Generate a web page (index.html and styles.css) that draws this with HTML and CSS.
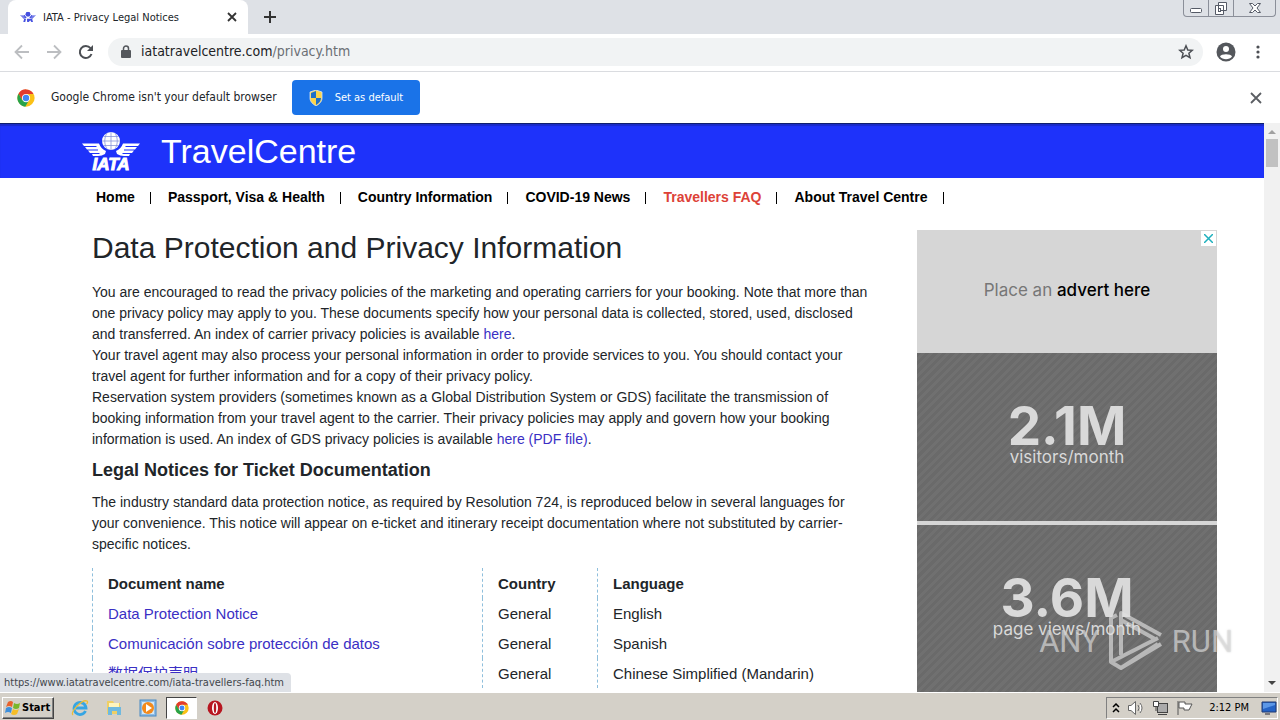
FILE: index.html
```html
<!DOCTYPE html>
<html lang="en">
<head>
<meta charset="utf-8">
<title>IATA - Privacy Legal Notices</title>
<link rel="stylesheet" href="styles.css">
</head>
<body>
<svg width="0" height="0" class="defs" aria-hidden="true">
  <symbol id="chrome" viewBox="0 0 48 48">
    <circle cx="24" cy="24" r="23" fill="#fbc116"/>
    <path d="M24 1A23 23 0 0 0 4 12.600L14 30L24 13H44A23 23 0 0 0 24 1Z" fill="#e33b2e"/>
    <path d="M4 12.600A23 23 0 0 0 22 47L32 30L14 30Z" fill="#28a34a"/>
    <circle cx="24" cy="24" r="11" fill="#fff"/>
    <circle cx="24" cy="24" r="8.500" fill="#4286f4"/>
  </symbol>
  <symbol id="wings" viewBox="0 0 58 26">
    <path d="M0 11.500H17Q19 17 24 19L23 22Q20 24 16 24H11L10 22H17L18 21H8L6 18.500H16V17.500H5L3 15H15L14 14H2ZM58 11.500H41Q39 17 34 19L35 22Q38 24 42 24H47L48 22H41L40 21H50L52 18.500H42V17.500H53L55 15H43L44 14H56Z" fill="currentColor"/>
    <circle cx="29" cy="9" r="9" fill="currentColor"/>
  </symbol>
</svg>

<header class="tabstrip">
  <div class="tab">
    <svg class="favicon" viewBox="0 0 58 38" aria-hidden="true"><use href="#wings" width="58" height="26"/><path d="M15 25H22L19 37H12ZM25 25H44L47 37H41L37 31L32 37H26Z" fill="currentColor"/></svg>
    <span class="tab-title">IATA - Privacy Legal Notices</span>
    <button class="icon-btn tab-close" aria-label="Close tab"><svg width="10" height="10" viewBox="0 0 10 10"><path d="M1 1L9 9M9 1L1 9" stroke="#333" stroke-width="1.800"/></svg></button>
  </div>
  <button class="icon-btn new-tab" aria-label="New tab"><svg width="12" height="12" viewBox="0 0 12 12"><path d="M6 0V12M0 6H12" stroke="#333" stroke-width="2"/></svg></button>
  <div class="window-buttons">
    <button aria-label="Minimize"><svg width="12" height="16" viewBox="0 0 12 16"><rect x=".5" y="8.500" width="11" height="4" rx="1" fill="#fff" stroke="#555a66"/></svg></button>
    <button aria-label="Restore"><svg width="14" height="16" viewBox="0 0 14 16"><path d="M4.500 2.500H12.500V10.500H4.500ZM1.500 5.500H9.500V14.500H1.500Z" fill="#fff" stroke="#555a66"/><rect x="4.500" y="8.500" width="2" height="3" fill="#fff" stroke="#555a66"/></svg></button>
    <button class="wide" aria-label="Close"><svg width="12" height="16" viewBox="0 0 12 16"><path d="M.5 3.500H3.500L6 6L8.500 3.500H11.500L8 8L11.500 12.500H8.500L6 10L3.500 12.500H.5L4 8Z" fill="#fff" stroke="#555a66"/></svg></button>
  </div>
</header>

<nav class="toolbar" aria-label="Browser">
  <button class="icon-btn" aria-label="Back"><svg width="16" height="16" viewBox="0 0 16 16"><path d="M15 8H2M8 1.500L1.500 8L8 14.500" fill="none" stroke="#bcbec1" stroke-width="1.800"/></svg></button>
  <button class="icon-btn" aria-label="Forward"><svg width="16" height="16" viewBox="0 0 16 16"><path d="M1 8H14M8 1.500L14.500 8L8 14.500" fill="none" stroke="#bcbec1" stroke-width="1.800"/></svg></button>
  <button class="icon-btn" aria-label="Reload"><svg width="16" height="16" viewBox="0 0 16 16"><path d="M13.500 10A6 6 0 1 1 12.500 4.200" fill="none" stroke="#4c4f54" stroke-width="2"/><path d="M15 1V7H9Z" fill="#4c4f54"/></svg></button>
  <div class="omnibox">
    <svg width="10" height="13" viewBox="0 0 10 13" aria-hidden="true"><rect y="5" width="10" height="8" rx="1" fill="#54575c"/><path d="M2.500 5.500V3.500A2.500 2.500 0 0 1 7.500 3.500V5.500" fill="none" stroke="#54575c" stroke-width="1.500"/></svg>
    <span class="url">iatatravelcentre.com<span class="path">/privacy.htm</span></span>
    <button class="icon-btn star" aria-label="Bookmark"><svg width="16" height="16" viewBox="0 0 16 16"><path d="M8 1.800L9.800 6L14.300 6.300L10.900 9.200L12 13.700L8 11.300L4 13.700L5.100 9.200L1.700 6.300L6.200 6Z" fill="none" stroke="#4c4f54" stroke-width="1.500"/></svg></button>
  </div>
  <button class="icon-btn" aria-label="Profile"><svg width="20" height="20" viewBox="0 0 20 20"><circle cx="10" cy="10" r="9.500" fill="#54575c"/><circle cx="10" cy="7" r="3" fill="#fff"/><path d="M4 14.500C5 11.500 15 11.500 16 14.500C13.500 18 6.500 18 4 14.500Z" fill="#fff"/></svg></button>
  <button class="icon-btn more" aria-label="Menu"><svg width="4" height="14" viewBox="0 0 4 14" fill="#4c4f54"><circle cx="2" cy="2" r="1.600"/><circle cx="2" cy="7" r="1.600"/><circle cx="2" cy="12" r="1.600"/></svg></button>
</nav>

<section class="infobar">
  <svg width="18" height="18" aria-hidden="true"><use href="#chrome"/></svg>
  <span class="info-text">Google Chrome isn't your default browser</span>
  <button class="default-btn"><svg width="14" height="16" viewBox="0 0 14 16"><path d="M7 0L13 2V8C13 12 10 14 7 16C4 14 1 12 1 8V2Z" fill="#fbd449" stroke="#d9e4f2" stroke-width=".8"/><path d="M7 1L2 3V8H7ZM7 8H12C12 11 10 13 7 15Z" fill="#1d6fc9"/></svg>Set as default</button>
  <button class="icon-btn info-close" aria-label="Dismiss"><svg width="12" height="12" viewBox="0 0 12 12"><path d="M1 1L11 11M11 1L1 11" stroke="#5b5e63" stroke-width="1.800"/></svg></button>
</section>

<div class="viewport">
  <div class="page">
    <header class="banner">
      <svg class="iata-logo" width="58" height="42" viewBox="0 -2 58 42" role="img" aria-label="IATA logo">
        <g color="#fff"><use href="#wings" width="58" height="26"/></g>
        <path d="M29 0V18M20 9H38M22 4.500H36M22 13.500H36M25 1C22 6 22 12 25 17M33 1C36 6 36 12 33 17" fill="none" stroke="#8994d8" stroke-width=".8"/>
        <text x="29" y="38" text-anchor="middle" class="logo-text">IATA</text>
      </svg>
      <span class="brand">TravelCentre</span>
    </header>
    <nav class="menu" aria-label="Main">
      <a href="#">Home</a><a href="#">Passport, Visa &amp; Health</a><a href="#">Country Information</a><a href="#">COVID-19 News</a><a href="#" class="hot">Travellers FAQ</a><a href="#">About Travel Centre</a>
    </nav>
    <div class="columns">
      <main>
        <h1>Data Protection and Privacy Information</h1>
        <p>You are encouraged to read the privacy policies of the marketing and operating carriers for your booking. Note that more than one privacy policy may apply to you. These documents specify how your personal data is collected, stored, used, disclosed and transferred. An index of carrier privacy policies is available <a href="#">here</a>.<br>
        Your travel agent may also process your personal information in order to provide services to you. You should contact your travel agent for further information and for a copy of their privacy policy.<br>
        Reservation system providers (sometimes known as a Global Distribution System or GDS) facilitate the transmission of booking information from your travel agent to the carrier. Their privacy policies may apply and govern how your booking information is used. An index of GDS privacy policies is available <a href="#">here (PDF file)</a>.</p>
        <h2>Legal Notices for Ticket Documentation</h2>
        <p>The industry standard data protection notice, as required by Resolution 724, is reproduced below in several languages for your convenience. This notice will appear on e-ticket and itinerary receipt documentation where not substituted by carrier-specific notices.</p>
        <table>
          <thead><tr><th class="doc">Document name</th><th class="country">Country</th><th>Language</th></tr></thead>
          <tbody>
            <tr><td><a href="#">Data Protection Notice</a></td><td>General</td><td>English</td></tr>
            <tr><td><a href="#">Comunicación sobre protección de datos</a></td><td>General</td><td>Spanish</td></tr>
            <tr><td><a href="#" lang="zh">数据保护声明</a></td><td>General</td><td>Chinese Simplified (Mandarin)</td></tr>
          </tbody>
        </table>
      </main>
      <aside class="ad">
        <div class="ad-top">
          <span>Place an <b>advert here</b></span>
          <button class="ad-close" aria-label="Close ad"><svg width="9" height="9" viewBox="0 0 9 9"><path d="M0 0L9 9M9 0L0 9" stroke="#1fb0bd" stroke-width="1.500"/></svg></button>
        </div>
        <div class="ad-stat"><strong>2.1M</strong><span>visitors/month</span></div>
        <div class="ad-stat"><strong>3.6M</strong><span>page views/month</span></div>
      </aside>
    </div>
  </div>
  <div class="scrollbar" aria-hidden="true">
    <svg width="8" height="4" viewBox="0 0 8 4"><path d="M0 4L4 0L8 4Z" fill="#a0a0a0"/></svg>
    <div class="thumb"></div>
    <svg class="down" width="8" height="4" viewBox="0 0 8 4"><path d="M0 0L4 4L8 0Z" fill="#444"/></svg>
  </div>
  <div class="status">https://www.iatatravelcentre.com/iata-travellers-faq.htm</div>
  <div class="watermark" aria-hidden="true">
    <span>ANY</span>
    <svg width="56" height="62" viewBox="0 0 56 62"><path d="M13 45V3L53 25M50 34L13 58L3 52V8L9 5M13 10L47 29M3 52L50 28M13 58L53 34" fill="none" stroke="currentColor" stroke-width="4" stroke-linejoin="round"/></svg>
    <span>RUN</span>
  </div>
</div>

<footer class="taskbar">
  <button class="start"><svg width="16" height="16" viewBox="0 0 16 16"><path d="M3 2Q6 0 8 2L7 7Q4 5 1 7Z" fill="#e8622c"/><path d="M9 3Q12 5 15 3L14 8Q11 10 8 8Z" fill="#79b72b"/><path d="M1 8Q4 6 7 8L6 13Q3 11 0 13Z" fill="#3d8fdc"/><path d="M8 9Q11 11 14 9L12 14Q9 16 6 14Z" fill="#f6bd27"/></svg>Start</button>
  <div class="quick">
    <button aria-label="Internet Explorer"><svg width="18" height="18" viewBox="0 0 18 18"><path d="M14.500 12A6 6 0 1 1 15 9H5" fill="none" stroke="#36a5e3" stroke-width="2.800"/><path d="M2 16C-1 13 11 0 16 2C17 3 16.500 4 15.500 5" fill="none" stroke="#edbd35" stroke-width="1.300"/></svg></button>
    <button aria-label="Explorer"><svg width="18" height="18" viewBox="0 0 18 18"><path d="M2 2H8L9 4H15V15H2Z" fill="#efcf65"/><path d="M4 4H14V9H4Z" fill="#fff5bd"/><path d="M3 8H16V16H12V12H7V16H3Z" fill="#6fb9df"/></svg></button>
    <button aria-label="Media Player"><svg width="18" height="18" viewBox="0 0 18 18"><rect x="1" y="1" width="16" height="16" fill="#8ebce4" stroke="#4889c3"/><rect x="3" y="3" width="12" height="12" fill="#d4e8f6"/><circle cx="9" cy="9" r="6" fill="#f38a1c"/><path d="M7 5L13 9L7 13Z" fill="#fff"/></svg></button>
    <button class="active" aria-label="Chrome"><svg width="14" height="14"><use href="#chrome"/></svg></button>
    <button aria-label="Opera"><svg width="18" height="18" viewBox="0 0 18 18"><circle cx="9" cy="9" r="7.500" fill="#b71620"/><ellipse cx="9" cy="9" rx="3" ry="6" fill="#fff"/><ellipse cx="9" cy="9" rx="1.200" ry="5" fill="#b71620"/></svg></button>
  </div>
  <div class="tray">
    <svg width="8" height="10" viewBox="0 0 8 10"><path d="M1 4L4 1L7 4M1 9L4 6L7 9" fill="none" stroke="#000" stroke-width="1.500"/></svg>
    <svg width="18" height="16" viewBox="0 0 18 16"><path d="M1.500 5.500H4L8.500 1.500V14.500L4 10.500H1.500ZM11 5Q13 8 11 11M13 3Q17 8 13 13" fill="#fff" stroke="#666"/></svg>
    <svg width="17" height="16" viewBox="0 0 17 16"><rect x="5.500" y="3.500" width="10" height="9" fill="#aaa" stroke="#444"/><path d="M1.500 1.500H6.500V6.500H1.500ZM4 6V11M6 14.500H15" fill="#fff" stroke="#444"/></svg>
    <svg width="18" height="16" viewBox="0 0 18 16"><path d="M2 1V15M3 2H9V4H16L13 10H8V8H3Z" fill="#fff" stroke="#555"/></svg>
    <time>2:12 PM</time>
    <svg width="16" height="14" viewBox="0 0 16 14"><path d="M1 1H15V11H1Z" fill="#2563c5" stroke="#213b72"/><path d="M2 2H14V4L2 8Z" fill="#5c97e6"/><path d="M4 13H9" stroke="#223"/></svg>
  </div>
</footer>
</body>
</html>
```
FILE: styles.css
```css
* { box-sizing: border-box; }
body {
  margin: 0;
  height: 100vh;
  display: flex;
  flex-direction: column;
  overflow: hidden;
  background: #fff;
  color: #212529;
  font-family: "Liberation Sans", Arial, "Noto Sans CJK SC", sans-serif;
  font-size: 15px;
  line-height: 21px;
}
button { font: inherit; border: 0; padding: 0; background: none; color: inherit; }
svg { display: block; flex: none; }
a { color: #3a2fc4; text-decoration: none; }
.defs { position: absolute; }

.tabstrip, .toolbar, .infobar, .status, .taskbar {
  font-family: "DejaVu Sans Condensed", "Noto Sans", sans-serif;
  font-size: 11px;
}
.tabstrip { display: flex; height: 34px; flex: none; background: #dee1e6; padding-left: 8px; }
.tab { display: flex; align-items: center; width: 240px; background: #fff; border-radius: 8px 8px 0 0; padding: 0 11px 0 12px; }
.favicon { width: 16px; height: 12px; color: #4550e0; }
.tab-title { margin-left: 7px; flex: 1; white-space: nowrap; }
.icon-btn { display: flex; align-items: center; justify-content: center; flex: none; }
.new-tab { margin-left: 16px; }
.window-buttons { display: flex; margin-left: auto; margin-right: 4px; height: 17px; border: 1px solid #8b8f99; border-top: 0; border-radius: 0 0 4px 4px; }
.window-buttons button { width: 25px; display: flex; justify-content: center; border-right: 1px solid #8b8f99; }
.window-buttons .wide { width: 41px; border-right: 0; }

.toolbar { display: flex; align-items: center; gap: 16px; flex: none; height: 38px; padding: 0 20px 2px 14px; border-bottom: 1px solid #dadce0; }
.omnibox { display: flex; align-items: center; flex: 1; height: 28px; margin-right: -3px; margin-left: -2px; padding: 0 9px 0 13px; border-radius: 14px; background: #f1f3f4; }
.url { font-size: 14px; margin-left: 10px; color: #202124; }
.path { color: #6b6f74; }
.star { margin-left: auto; }
.more { margin-left: 4px; }

.infobar { display: flex; align-items: center; flex: none; height: 51px; padding: 0 18px 0 17px; }
.info-text { font-size: 12px; margin-left: 16px; }
.default-btn { display: flex; align-items: center; gap: 12px; height: 35px; margin-left: 15px; padding: 0 17px; border-radius: 4px; background: #1a73e8; color: #fff; }
.info-close { margin-left: auto; }

.viewport { position: relative; display: flex; flex: 1; min-height: 0; }
.page { flex: 1; min-width: 0; overflow: hidden; }
.banner { display: flex; align-items: center; height: 55px; padding-left: 82px; gap: 21px; background: #1e32fa; border-top: 1px solid #10206e; box-shadow: inset 0 2px 1px #1a2bc8; color: #fff; }
.iata-logo { overflow: visible; }
.logo-text { font: italic bold 17px "Liberation Sans", sans-serif; fill: #fff; stroke: #fff; stroke-width: 1px; }
.brand { font-size: 34px; line-height: 40px; }
.menu { display: flex; padding: 9px 0 0 96px; font-size: 14px; font-weight: bold; }
.menu a { display: flex; align-items: center; color: #000; }
.menu a::after { content: ""; width: 1px; height: 12px; margin: 0 17px 0 15px; background: #000; }
.menu .hot { color: #dd4238; }

.columns { display: grid; grid-template-columns: 1fr 300px; gap: 18px; padding: 22px 47px 0 92px; }
h1 { margin: 0 0 17px; font-size: 30px; line-height: 35px; font-weight: normal; }
p { margin: 0 0 10px; padding-right: 28px; font-size: 14px; }
h2 { margin: 0 0 11px; font-size: 18px; line-height: 21px; }
main p + table { margin-top: 13px; }
table { width: 100%; border-collapse: separate; border-spacing: 0; table-layout: fixed; }
th, td { height: 30px; padding: 0 15px; text-align: left; border-left: 1px dashed #8fbfdc; }
.doc { width: 390px; }
.country { width: 115px; }

.ad { display: flex; flex-direction: column; gap: 4px; background: #d6d6d6; font-family: Inter, "Open Sans", sans-serif; }
.ad-top { position: relative; display: flex; align-items: center; justify-content: center; height: 119px; padding-top: 2px; font-size: 17px; color: #777; }
.ad-top b { color: #000; font-weight: 500; }
.ad-close { position: absolute; top: 1px; right: 1px; width: 15px; height: 15px; display: flex; align-items: center; justify-content: center; background: #fff; }
.ad-stat { display: flex; flex-direction: column; align-items: center; height: 168px; padding-top: 53px; color: #d9d9d9; background: repeating-linear-gradient(135deg, #6a6a6a 0 3px, #707070 3px 6px); font-size: 17px; }
.ad-stat strong { font-size: 53px; line-height: 41px; }

.scrollbar { display: flex; flex-direction: column; align-items: center; flex: none; width: 16px; padding: 7px 2px; background: #f1f1f1; }
.thumb { width: 12px; height: 28px; margin-top: 5px; background: #c1c1c1; }
.down { margin-top: auto; }
.status { position: absolute; left: 0; bottom: 0; height: 19px; padding: 0 7px 0 4px; line-height: 19px; background: #dee1e6; color: #42464c; border-radius: 0 4px 0 0; }
.watermark { position: absolute; right: 47px; bottom: 20px; display: flex; align-items: center; gap: 8px; color: rgba(225, 225, 225, 0.65); font: 31px Roboto, sans-serif; text-shadow: 0 0 2px rgba(120, 120, 120, 0.4); }

.taskbar { display: flex; align-items: center; flex: none; height: 28px; padding: 2px 0 0 2px; background: #d4d0c8; border-top: 1px solid #fff; color: #000; }
.start { display: flex; align-items: center; gap: 1px; width: 52px; height: 22px; padding-left: 2px; font-weight: bold; border: 1px solid; border-color: #fff #444 #444 #fff; box-shadow: inset -1px -1px #808080; }
.quick { display: flex; margin-left: 9px; }
.quick button { width: 34px; height: 22px; display: flex; align-items: center; justify-content: center; }
.quick .active { width: 31px; background: #fff; border: 1px solid; border-color: #444 #fff #fff #444; margin: 0 1px; }
.tray { display: flex; align-items: center; gap: 7px; height: 22px; margin-left: auto; margin-right: 2px; padding: 0 0 0 5px; border: 1px solid; border-color: #808080 #fff #fff #808080; }
.tray time { margin: 0 5px 0 8px; }
```
